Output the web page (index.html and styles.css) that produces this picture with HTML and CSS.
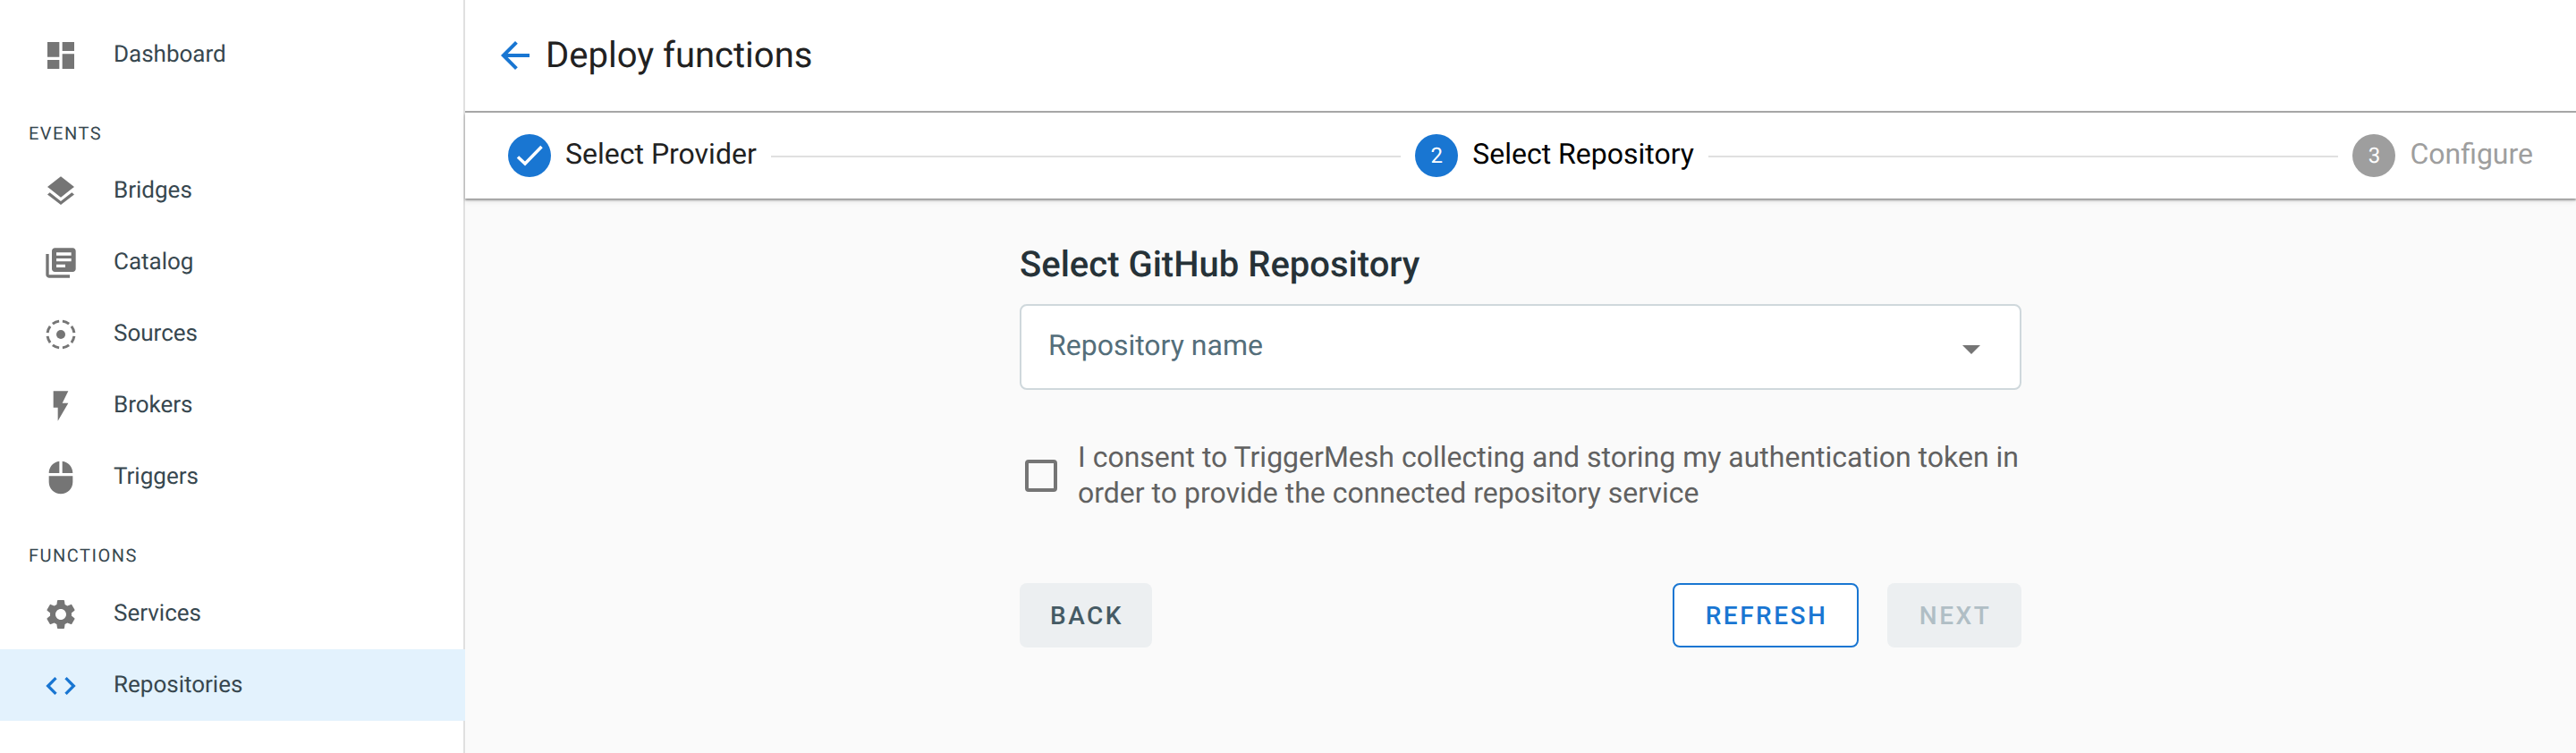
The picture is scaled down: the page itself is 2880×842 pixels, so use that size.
FILE: index.html
```html
<!DOCTYPE html>
<html lang="en">
<head>
<meta charset="utf-8">
<title>Deploy functions</title>
<link rel="stylesheet" href="styles.css">
</head>
<body>
<div class="app">
  <nav class="sidebar">
    <a class="nav-item"><svg class="nav-icon" viewBox="0 0 24 24"><path d="M3 13h8V3H3v10zm0 8h8v-6H3v6zm10 0h8V11h-8v10zm0-18v6h8V3h-8z"/></svg><span>Dashboard</span></a>
    <div class="nav-heading">EVENTS</div>
    <a class="nav-item"><svg class="nav-icon" viewBox="0 0 24 24"><path d="M11.99 18.54l-7.37-5.73L3 14.07l9 7 9-7-1.63-1.27-7.38 5.74zM12 16l7.36-5.73L21 9l-9-7-9 7 1.63 1.27L12 16z"/></svg><span>Bridges</span></a>
    <a class="nav-item"><svg class="nav-icon" viewBox="0 0 24 24"><path d="M4 6H2v14c0 1.1.9 2 2 2h14v-2H4V6zm16-4H8c-1.1 0-2 .9-2 2v12c0 1.1.9 2 2 2h12c1.1 0 2-.9 2-2V4c0-1.1-.9-2-2-2zm-1 9H9V9h10v2zm-4 4H9v-2h6v2zm4-8H9V5h10v2z"/></svg><span>Catalog</span></a>
    <a class="nav-item"><svg class="nav-icon" viewBox="0 0 24 24"><circle class="dash-ring" cx="12" cy="12" r="9" pathLength="48"/><circle cx="12" cy="12" r="3"/></svg><span>Sources</span></a>
    <a class="nav-item"><svg class="nav-icon" viewBox="0 0 24 24"><path d="M7 2v11h3v9l7-12h-4l4-8z"/></svg><span>Brokers</span></a>
    <a class="nav-item"><svg class="nav-icon" viewBox="0 0 24 24"><path d="M13 1.07V9h7c0-4.08-3.05-7.44-7-7.93zM4 15c0 4.42 3.58 8 8 8s8-3.58 8-8v-4H4v4zm7-13.93C7.05 1.56 4 4.92 4 9h7V1.07z"/></svg><span>Triggers</span></a>
    <div class="nav-heading nav-heading-tall">FUNCTIONS</div>
    <a class="nav-item"><svg class="nav-icon" viewBox="0 0 24 24"><path d="M19.14 12.94c.04-.3.06-.61.06-.94 0-.32-.02-.64-.07-.94l2.03-1.58c.18-.14.23-.41.12-.61l-1.92-3.32c-.12-.22-.37-.29-.59-.22l-2.39.96c-.5-.38-1.03-.7-1.62-.94l-.36-2.54c-.04-.24-.24-.41-.48-.41h-3.84c-.24 0-.43.17-.47.41l-.36 2.54c-.59.24-1.13.57-1.62.94l-2.39-.96c-.22-.08-.47 0-.59.22L2.74 8.87c-.12.21-.08.47.12.61l2.03 1.58c-.05.3-.09.63-.09.94s.02.64.07.94l-2.03 1.58c-.18.14-.23.41-.12.61l1.92 3.32c.12.22.37.29.59.22l2.39-.96c.5.38 1.03.7 1.62.94l.36 2.54c.05.24.24.41.48.41h3.84c.24 0 .44-.17.47-.41l.36-2.54c.59-.24 1.13-.56 1.62-.94l2.39.96c.22.08.47 0 .59-.22l1.92-3.32c.12-.22.07-.47-.12-.61l-2.01-1.58zM12 15.6c-1.98 0-3.6-1.62-3.6-3.6s1.62-3.6 3.6-3.6 3.6 1.62 3.6 3.6-1.62 3.6-3.6 3.6z"/></svg><span>Services</span></a>
    <a class="nav-item active"><svg class="nav-icon" viewBox="0 0 24 24"><path d="M9.4 16.6L4.8 12l4.6-4.6L8 6l-6 6 6 6 1.4-1.4zm5.2 0l4.6-4.6-4.6-4.6L16 6l6 6-6 6-1.4-1.4z"/></svg><span>Repositories</span></a>
  </nav>
  <main class="main">
    <header class="topbar">
      <svg class="back-icon" viewBox="0 0 24 24"><path d="M20 11H7.83l5.59-5.59L12 4l-8 8 8 8 1.41-1.41L7.83 13H20v-2z"/></svg>
      <h1 class="title">Deploy functions</h1>
    </header>
    <div class="stepper">
      <div class="step">
        <span class="step-circle"><svg class="check-icon" viewBox="0 0 48 48"><path d="M11 25.5l8 7.5L37.5 14"/></svg></span>
        <span class="step-label done">Select Provider</span>
      </div>
      <div class="connector"></div>
      <div class="step">
        <span class="step-circle">2</span>
        <span class="step-label current">Select Repository</span>
      </div>
      <div class="connector"></div>
      <div class="step">
        <span class="step-circle pending">3</span>
        <span class="step-label todo">Configure</span>
      </div>
    </div>
    <section class="content">
      <div class="form">
        <h2 class="form-title">Select GitHub Repository</h2>
        <div class="select">
          <span class="select-text">Repository name</span>
          <span class="select-caret"></span>
        </div>
        <label class="consent">
          <span class="checkbox"></span>
          <span class="consent-text">I consent to TriggerMesh collecting and storing my authentication token in order to provide the connected repository service</span>
        </label>
        <div class="actions">
          <button class="btn btn-back">BACK</button>
          <div class="actions-right">
            <button class="btn btn-refresh">REFRESH</button>
            <button class="btn btn-next">NEXT</button>
          </div>
        </div>
      </div>
    </section>
  </main>
</div>
</body>
</html>
```
FILE: styles.css
```css
* { box-sizing: border-box; }
html, body { margin: 0; height: 100%; }
body { font-family: Roboto, "Liberation Sans", sans-serif; background: #fff; color: #212121; overflow: hidden; text-rendering: geometricPrecision; }
.app { display: flex; height: 842px; }

.sidebar { width: 520px; flex: none; padding-top: 21px; background: #fff; border-right: 2px solid #e0e0e0; }
.nav-item { display: flex; align-items: center; height: 80px; padding-left: 48px; margin-right: -2px; font-size: 26px; color: #37474f; }
.nav-item span { margin-left: 39px; }
.nav-item.active { background: #e3f2fd; }
.nav-icon { width: 40px; height: 40px; fill: #757575; flex: none; margin-top: 2px; }
.active .nav-icon { fill: #1976d2; }
.dash-ring { fill: none; stroke: #757575; stroke-width: 1.8; stroke-dasharray: 4 2; stroke-dashoffset: -1; }
.nav-heading { height: 72px; padding: 36px 0 0 32px; font-size: 20px; line-height: 24px; letter-spacing: 1.5px; color: #37474f; }
.nav-heading-tall { height: 73px; }

.main { flex: 1; min-width: 0; display: flex; flex-direction: column; }
.topbar { display: flex; align-items: center; height: 126px; padding: 0 0 0 32px; border-bottom: 2px solid #a6a6a6; position: relative; z-index: 2; }
.back-icon { width: 48px; height: 48px; fill: #1976d2; flex: none; }
.title { margin: 0 0 2px 10px; font-size: 40px; font-weight: 400; color: #212121; }

.stepper { display: flex; align-items: center; height: 96px; padding: 0 48px; background: #fff; box-shadow: 0 2px 2px rgba(0,0,0,.35), 0 3px 6px rgba(0,0,0,.1); position: relative; z-index: 1; }
.step { display: flex; align-items: center; gap: 16px; flex: none; }
.step-circle { width: 48px; height: 48px; border-radius: 50%; background: #1976d2; color: #fff; font-size: 24px; display: flex; align-items: center; justify-content: center; }
.step-circle.pending { background: #9e9e9e; }
.check-icon { width: 48px; height: 48px; fill: none; stroke: #fff; stroke-width: 3.5; }
.step-label { font-size: 32px; margin-bottom: 4px; }
.step-label.done { color: #212121; }
.step-label.current { color: #000; }
.step-label.todo { color: #9e9e9e; }
.connector { flex: 1; height: 2px; margin: 2px 16px 0; background: #e0e0e0; }

.content { flex: 1; background: #fafafa; display: flex; justify-content: center; }
.form { width: 1120px; padding-top: 51px; }
.form-title { margin: 0; font-size: 40px; line-height: 46px; font-weight: 500; color: #263238; }
.select { display: flex; align-items: center; justify-content: space-between; height: 96px; margin-top: 21px; padding: 0 30px; background: #fff; border: 2px solid #cfd8dc; border-radius: 8px; }
.select-text { font-size: 32px; color: #546e7a; margin-bottom: 4px; }
.select-caret { width: 0; height: 0; border-left: 10px solid transparent; border-right: 10px solid transparent; border-top: 10px solid #757575; margin: 6px 14px 0 0; }
.consent { display: flex; align-items: center; margin-top: 55px; padding-left: 6px; }
.checkbox { width: 36px; height: 36px; flex: none; border: 4px solid #757575; border-radius: 4px; margin-top: 2px; }
.consent-text { margin-left: 23px; width: 1060px; font-size: 32px; line-height: 40px; color: #616161; }
.actions { display: flex; justify-content: space-between; margin-top: 81px; }
.actions-right { display: flex; gap: 32px; }
.btn { height: 72px; border-radius: 8px; border: 0; font-family: inherit; font-size: 28px; font-weight: 500; letter-spacing: 2.5px; background: #eceff1; padding: 0 0 0 2px; }
.btn-back { width: 148px; color: #455a64; }
.btn-refresh { width: 208px; background: #fff; border: 2px solid #1976d2; color: #1976d2; }
.btn-next { width: 150px; color: #b0bec5; }
```
